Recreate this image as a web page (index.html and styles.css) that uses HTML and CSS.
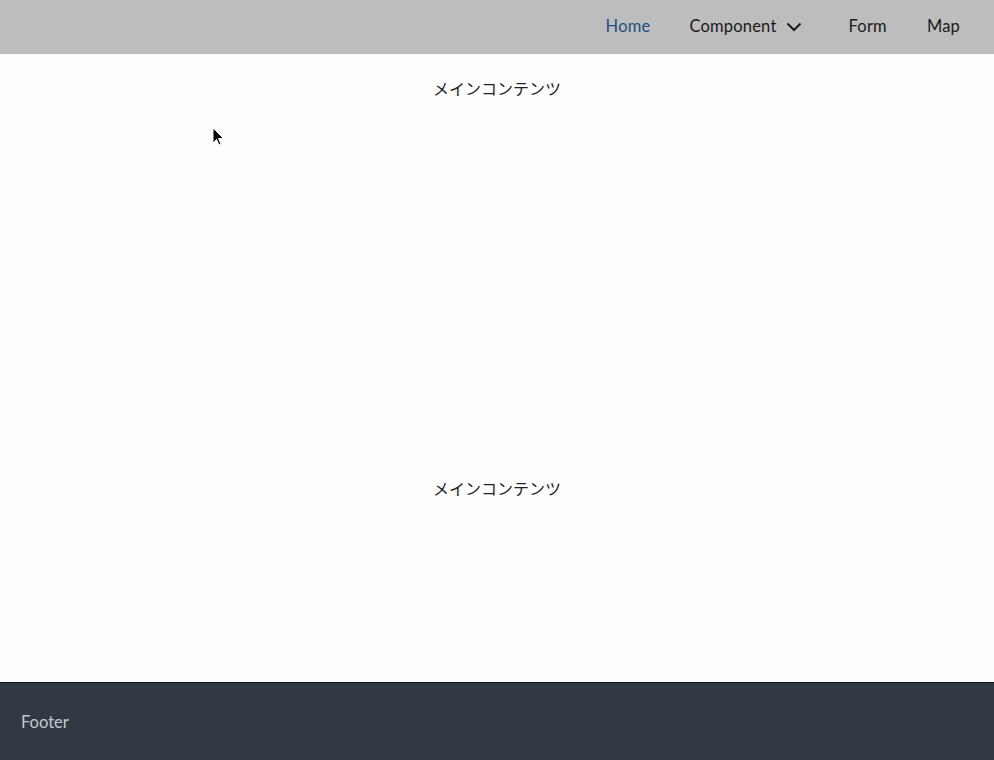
FILE: index.html
```html
<html>
<head>
    <meta charset="utf-8">
    <link rel="stylesheet" href="styles.css">
</head>
<body>
<div class="page">
    <header class="header">
        <nav class="nav">
            <a class="nav-item active" href="#">Home</a>
            <a class="nav-item dropdown" href="#">Component
                <svg class="chevron" width="16" height="10" viewBox="0 0 16 10"><path d="M1.5 1.5 L8 8 L14.5 1.5" fill="none" stroke="#1a1a1a" stroke-width="2"/></svg>
            </a>
            <a class="nav-item" href="#">Form</a>
            <a class="nav-item" href="#">Map</a>
        </nav>
    </header>
    <main class="main">
        <section class="section">メインコンテンツ</section>
        <section class="section">メインコンテンツ</section>
    </main>
    <footer class="footer">Footer</footer>
</div>
<svg class="cursor" width="14" height="20" viewBox="0 0 14 20"><path d="M1 1 L1 16 L4.5 12.5 L7 18 L9 17 L6.5 11.5 L11.5 11.5 Z" fill="#000" stroke="#fff" stroke-width="1"/></svg>
</body>
</html>
```
FILE: styles.css
```css
body {
    margin: 0;
    font-family: Lato, "Noto Sans", "Noto Sans CJK JP", sans-serif;
    background: #fdfdfd;
    color: #1a1a1a;
}
.page {
    height: 760px;
    display: flex;
    flex-direction: column;
    overflow: hidden;
}
.header {
    height: 54px;
    flex-shrink: 0;
    background: #bdbdbd;
    display: flex;
    justify-content: flex-end;
    align-items: center;
    padding-right: 34px;
}
.nav {
    display: flex;
    align-items: center;
    gap: 40px;
    margin-top: -2px;
}
.nav-item {
    font-size: 16.5px;
    color: #1a1a1a;
    text-decoration: none;
    display: flex;
    align-items: center;
    letter-spacing: 0.2px;
}
.nav-item.active {
    color: #1d4f80;
    margin-right: -1px;
}
.dropdown {
    margin-right: 7px;
}
.chevron {
    margin-left: 9px;
    margin-top: 1px;
}
.main {
    flex: 1;
    overflow: hidden;
}
.section {
    height: 400px;
    box-sizing: border-box;
    padding-top: 22px;
    text-align: center;
    font-family: "Noto Sans CJK JP", sans-serif;
    font-size: 16px;
    color: #222;
}
.footer {
    height: 78px;
    flex-shrink: 0;
    border-top: 1px solid #111;
    background: #313a44;
    color: #c4c8cc;
    font-size: 16.5px;
    padding-left: 21px;
    box-sizing: border-box;
    display: flex;
    align-items: center;
}
.cursor {
    position: absolute;
    left: 212px;
    top: 127px;
}
```
